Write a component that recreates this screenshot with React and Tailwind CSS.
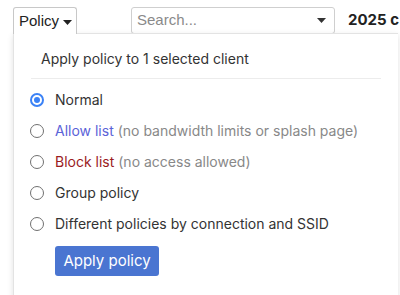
import { useState } from "react";

const options = [
  { id: "normal", label: "Normal" },
  { id: "allow", label: "Allow list", color: "text-[#5b63d8]", note: "(no bandwidth limits or splash page)" },
  { id: "block", label: "Block list", color: "text-[#9a1c1f]", note: "(no access allowed)" },
  { id: "group", label: "Group policy" },
  { id: "ssid", label: "Different policies by connection and SSID" },
];

function Radio({ checked }) {
  if (checked) {
    return (
      <span className="w-[14px] h-[14px] rounded-full border-2 border-[#3b82f6] flex items-center justify-center bg-white">
        <span className="w-[6px] h-[6px] rounded-full bg-[#3b82f6]" />
      </span>
    );
  }
  return <span className="w-[14px] h-[14px] rounded-full border border-[#707070] bg-white" />;
}

export default function App() {
  const [policy, setPolicy] = useState("normal");

  return (
    <div className="w-[400px] h-[295px] bg-white overflow-hidden relative font-['Inter',sans-serif] text-[#333]">
      <div className="flex items-start pt-[7px]">
        <button className="ml-[13px] h-[27px] w-[64px] border border-b-0 border-[#c8c8c8] rounded-t-[3px] flex items-center pl-[5px] text-[15px] font-['Liberation_Sans',sans-serif] text-[#222] bg-white relative z-10">
          Policy
          <svg width="9" height="5" viewBox="0 0 9 5" className="ml-[4px] mt-[2px]">
            <path d="M0 0h9L4.5 5z" fill="#222" />
          </svg>
        </button>
        <div className="ml-[54px] w-[204px] h-[27px] border border-[#cfcfcf] rounded-[3px] flex items-center pl-[5px] pr-[7px] justify-between">
          <span className="text-[15px] text-[#8a8a8a] font-['Liberation_Sans',sans-serif]">Search...</span>
          <svg width="9" height="5" viewBox="0 0 9 5" className="mr-[1px]">
            <path d="M0 0h9L4.5 5z" fill="#333" />
          </svg>
        </div>
        <div className="ml-[13px] h-[27px] flex items-center text-[15px] font-bold text-[#222] whitespace-nowrap">2025 c</div>
      </div>
      <div className="absolute left-[13px] top-[33px] w-[385px] h-[270px] border-l border-t border-[#e3e3e3] bg-white shadow-[0_2px_6px_rgba(0,0,0,0.12)]">
        <div className="pl-[27px] pt-[14px] text-[14px] leading-[21px] text-[#333]">Apply policy to 1 selected client</div>
        <div className="mx-[17px] mt-[9px] border-t border-[#ececec]" />
        <div className="pt-[5px] pl-[16px] flex flex-col">
          {options.map((o) => (
            <label key={o.id} className="h-[31px] flex items-center cursor-pointer" onClick={() => setPolicy(o.id)}>
              <span className="w-[25px] flex justify-start">
                <Radio checked={policy === o.id} />
              </span>
              <span className="text-[14px] whitespace-nowrap">
                <span className={o.color || "text-[#333]"}>{o.label}</span>
                {o.note && <span className="text-[#888]"> {o.note}</span>}
              </span>
            </label>
          ))}
        </div>
        <button className="ml-[41px] mt-[7px] w-[104px] h-[30px] rounded-[3px] bg-[#4a75d1] text-white text-[15px]">
          Apply policy
        </button>
      </div>
    </div>
  );
}
